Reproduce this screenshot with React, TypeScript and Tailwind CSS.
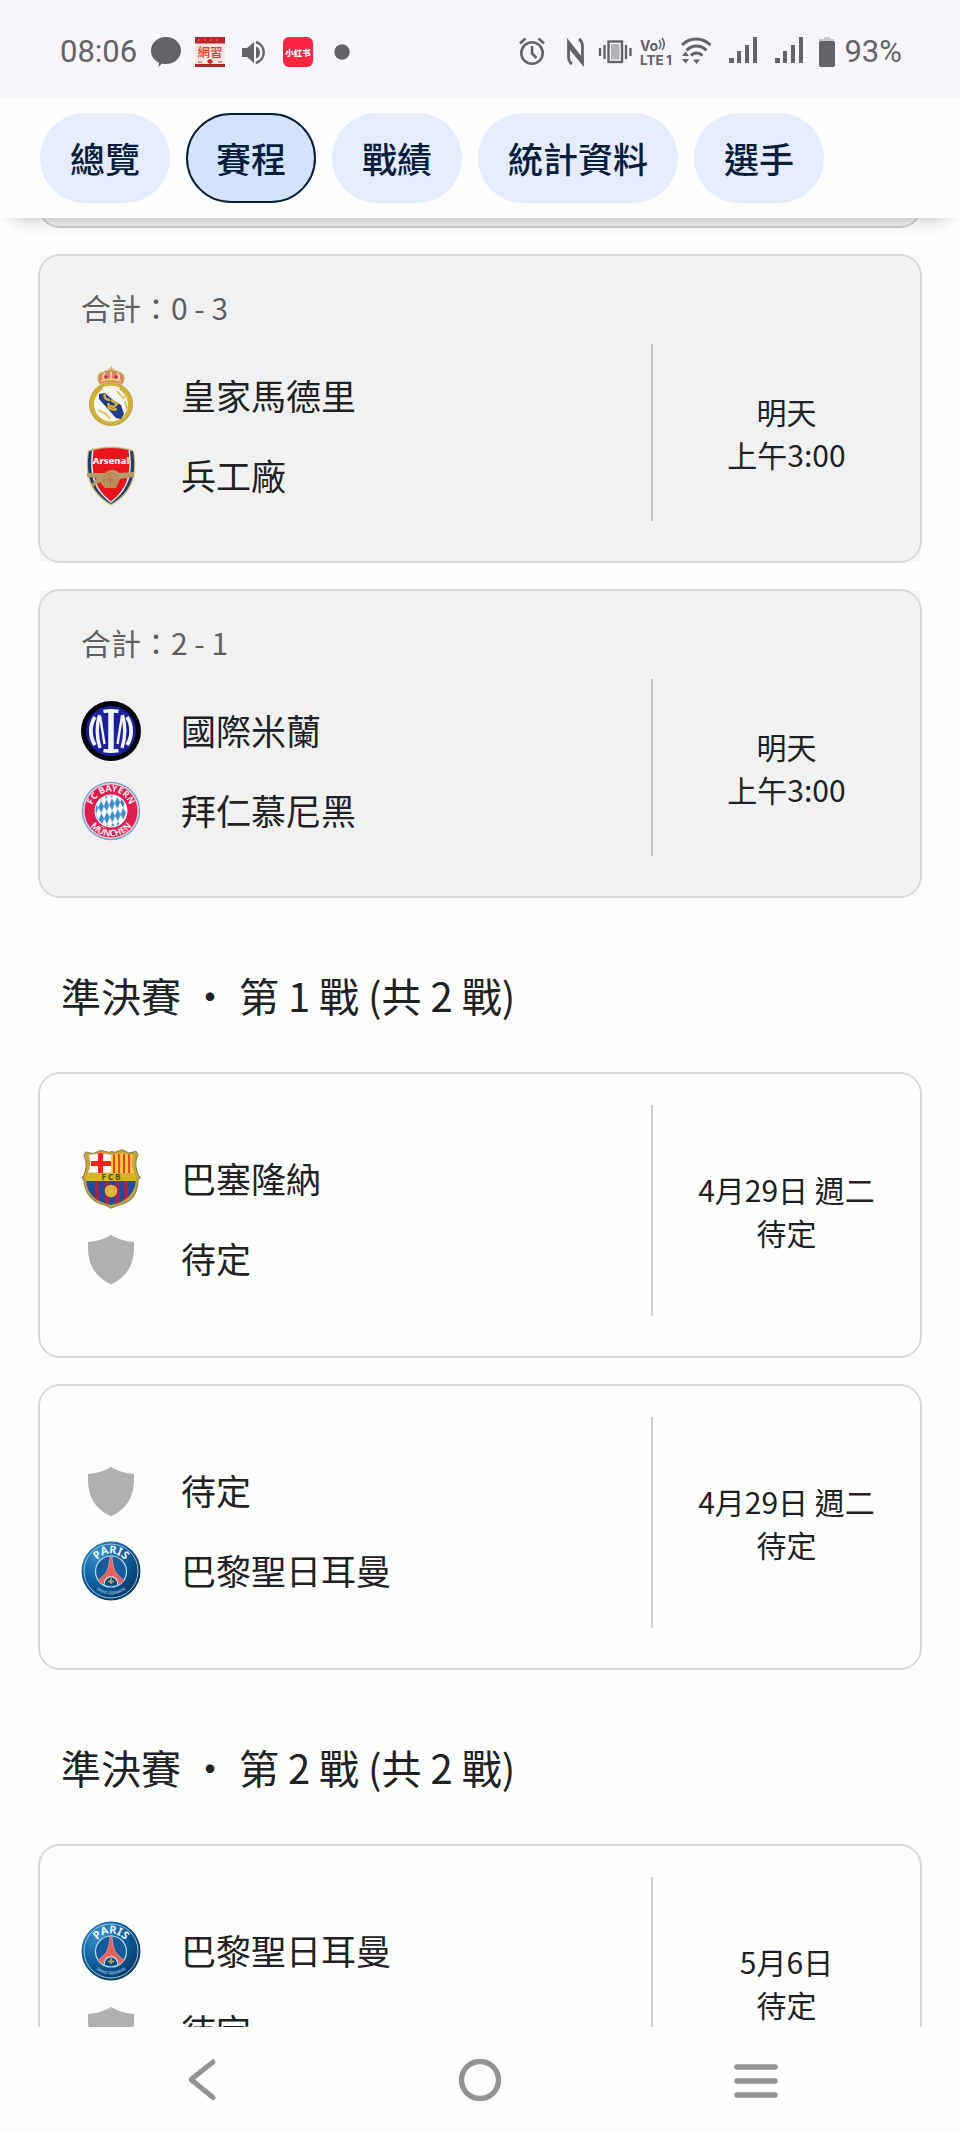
import React, { useState } from "react";

type Crest = "real" | "arsenal" | "inter" | "bayern" | "barca" | "psg" | "tbd";

interface Team {
  name: string;
  crest: Crest;
}

interface Match {
  aggregate?: string;
  teams: Team[];
  date: string;
  time: string;
}

const tbd: Team = { name: "待定", crest: "tbd" };
const barca: Team = { name: "巴塞隆納", crest: "barca" };
const psg: Team = { name: "巴黎聖日耳曼", crest: "psg" };

const quarterFinals: Match[] = [
  {
    aggregate: "合計：0 - 3",
    teams: [
      { name: "皇家馬德里", crest: "real" },
      { name: "兵工廠", crest: "arsenal" },
    ],
    date: "明天",
    time: "上午3:00",
  },
  {
    aggregate: "合計：2 - 1",
    teams: [
      { name: "國際米蘭", crest: "inter" },
      { name: "拜仁慕尼黑", crest: "bayern" },
    ],
    date: "明天",
    time: "上午3:00",
  },
];

const semiFinals = [
  {
    title: "準決賽 ・ 第 1 戰 (共 2 戰)",
    matches: [
      { teams: [barca, tbd], date: "4月29日 週二", time: "待定" },
      { teams: [tbd, psg], date: "4月29日 週二", time: "待定" },
    ],
  },
  {
    title: "準決賽 ・ 第 2 戰 (共 2 戰)",
    matches: [{ teams: [psg, tbd], date: "5月6日", time: "待定" }],
  },
];

const tabs = ["總覽", "賽程", "戰績", "統計資料", "選手"];

function RealCrest() {
  return (
    <svg viewBox="0 0 60 60" className="size-[60px]" aria-hidden="true">
      <circle cx="30" cy="38" r="21.5" fill="#d2b13a" />
      <circle cx="30" cy="38" r="21.5" fill="none" stroke="#b3942c" strokeWidth="0.8" />
      <circle cx="30" cy="38.5" r="17" fill="#f7f6f2" />
      <path d="M18 28l6-1 8 7 8 5 3 9-3 5-5-1-8-9-9-10z" fill="#1f3c88" />
      <path d="M24 28c-2 4 2 6 5 6M28 37c-2 5 2 8 8 6M30 34l6 4-3 3-4-1" fill="none" stroke="#d2b13a" strokeWidth="2.4" />
      <path d="M17 44l8 4 4 5M36 25l6 7 3-2M44 35l2 8" fill="none" stroke="#dcc15c" strokeWidth="1.8" />
      <ellipse cx="30" cy="22.5" rx="9" ry="2.8" fill="#f4f1e6" />
      <path d="M19 18c-4-6-2-11 4-12 2-2 4-2 7-2s5 0 7 2c6 1 8 6 4 12-7-2-15-2-22 0z" fill="#d9846a" stroke="#d9b65a" strokeWidth="1.2" />
      <path d="M20 15c6-2 14-2 20 0" fill="none" stroke="#e8cf7a" strokeWidth="1.6" />
      <path d="M30 0v7M27 3h6" stroke="#cfa94a" strokeWidth="1.2" />
      <path d="M24 7c-3 3-3 5-1 7M36 7c3 3 3 5 1 7M30 6v7" fill="none" stroke="#f0dca0" strokeWidth="1.6" />
      <circle cx="25" cy="11" r="1.4" fill="#b5262a" />
      <circle cx="35" cy="11" r="1.4" fill="#b5262a" />
    </svg>
  );
}

function ArsenalCrest() {
  return (
    <svg viewBox="0 0 60 60" className="size-[60px]" aria-hidden="true">
      <path d="M7 4.500C20-.5 40-.5 53 4.500c3 20 2 41-23 55C5 45.500 4 24.500 7 4.500z" fill="#c9b57c" />
      <path d="M8 5.500C21 .7 39 .7 52 5.500c3 19 1 39-22 52.500C7 44.500 5 24.500 8 5.500z" fill="#253c6b" />
      <path d="M11 4.500C23 1 37 1 49 4.500c2 19 2 37-19 52.500C9 41.500 9 23.500 11 4.500z" fill="#eef0f5" />
      <path d="M12.500 4.300C24 1.300 36 1.300 47.500 4.300c2 19 2 36-17.500 51.200C10.500 40.300 10.500 23.300 12.500 4.300z" fill="#e8161b" />
      <text x="30" y="18" textAnchor="middle" fontFamily="Noto Sans" fontWeight="800" fontSize="9.500" fill="#ffffff">
        Arsenal
      </text>
      <path d="M6 27h18c4-4 11-4 14 0l15-1v5l-14 2-4 9H24l-5-6-7 5-1-3 5-6-10-1z" fill="#b09a68" />
      <circle cx="29.500" cy="34" r="7" fill="#b09a68" stroke="#c9803f" strokeWidth="1.400" />
      <path d="M29.500 28v12M23.500 34h12M25.500 30l8 8M33.500 30l-8 8" stroke="#c96a45" strokeWidth="1" />
    </svg>
  );
}

function InterCrest() {
  return (
    <svg viewBox="0 0 60 60" className="size-[60px]" aria-hidden="true">
      <circle cx="30" cy="30" r="30" fill="#02020a" />
      <circle cx="30" cy="30" r="25" fill="#1a1f9c" />
      <g fill="none" stroke="#f3f4fb">
        <path d="M30 10v40" strokeWidth="5.500" />
        <path d="M22.500 10.500q7.500-1.500 15 0M22.500 49.500q7.500 1.500 15 0" strokeWidth="3.600" />
        <path d="M14 16C8.500 24 8.500 36 14 44" strokeWidth="3.800" />
        <path d="M46 16C51.500 24 51.500 36 46 44" strokeWidth="3.800" />
        <path d="M18.500 14c-3 10-3 22 .5 33" strokeWidth="3.400" />
        <path d="M41.500 14c3 10 3 22-.5 33" strokeWidth="3.400" />
        <path d="M19 15l4.500 28M41 15l-4.500 28" strokeWidth="2.400" />
      </g>
    </svg>
  );
}

function BayernCrest() {
  return (
    <svg viewBox="0 0 60 60" className="size-[60px]" aria-hidden="true">
      <defs>
        <clipPath id="bayern-core">
          <circle cx="30" cy="30" r="15.500" />
        </clipPath>
        <pattern id="bayern-lozenge" width="5.600" height="12" patternUnits="userSpaceOnUse" patternTransform="rotate(-14) skewX(-12)">
          <rect width="5.600" height="12" fill="#fff" />
          <path d="M2.800 0l2.800 6-2.800 6L0 6z" fill="#3d8cc8" />
        </pattern>
        <path id="bayern-top" d="M10.500 30a19.500 19.500 0 0 1 39 0" />
        <path id="bayern-bottom" d="M4.500 30a25.500 25.500 0 0 0 51 0" />
      </defs>
      <circle cx="30" cy="30" r="29.200" fill="#6f9fcf" />
      <circle cx="30" cy="30" r="28" fill="#f0cdda" />
      <circle cx="30" cy="30" r="26.500" fill="#dc1f50" />
      <circle cx="30" cy="30" r="16.500" fill="#fff" />
      <rect x="12" y="12" width="36" height="36" fill="url(#bayern-lozenge)" clipPath="url(#bayern-core)" />
      <g fontFamily="Noto Sans" fontWeight="700" fontSize="9" fill="#fbe9ee">
        <text textAnchor="middle">
          <textPath href="#bayern-top" startOffset="50%">FC BAYERN</textPath>
        </text>
        <text textAnchor="middle">
          <textPath href="#bayern-bottom" startOffset="50%">MÜNCHEN</textPath>
        </text>
      </g>
    </svg>
  );
}

function BarcaCrest() {
  const outline = "M5 3l7 1.500 8-3 8 2 3-1 2 1 8-2.500 7 3 7-1.500 2 3c-4 8-2 14 0 20l2 3-2 2c0 16-8 23-19 25.500L30 59l-6-3C13 54 4 46 3 31.500l-2-3 2-2c2-6 4-12 0-20z";
  return (
    <svg viewBox="0 0 60 60" className="size-[60px]" aria-hidden="true">
      <defs>
        <clipPath id="barca-shield">
          <path d="M8 6l12-2 10 2 10-2 12 2c-2 8-1 15 3 22 0 15-7 24-25 28C12 52 5 43 5 28 9 21 10 14 8 6z" />
        </clipPath>
      </defs>
      <path d={outline} fill="#c9a437" stroke="#8d8455" strokeWidth="1.200" />
      <g clipPath="url(#barca-shield)">
        <rect width="60" height="60" fill="#e5b92f" />
        <rect width="30" height="18.500" y="5" fill="#fdf6f2" />
        <path d="M19.500 4v20M10 14.500h20" stroke="#f0221c" strokeWidth="5" />
        <rect x="30" y="5" width="24" height="19" fill="#f8cf3a" />
        <path d="M33 5v19M38 5v19M43 5v19M48 5v19" stroke="#e4462a" strokeWidth="2.200" />
        <rect y="24" width="60" height="8" fill="#d6b133" />
        <rect y="32" width="60" height="28" fill="#1c4f9c" />
        <path d="M16 32v24M26 32v24M36 32v24M45 32v24" stroke="#a5234f" strokeWidth="4.600" />
      </g>
      <text x="30" y="31" textAnchor="middle" fontFamily="Noto Sans" fontWeight="700" fontSize="8" fill="#45522c">
        F C B
      </text>
      <circle cx="30" cy="42" r="6.200" fill="#e6bd39" />
      <circle cx="30" cy="42" r="4" fill="none" stroke="#c99c28" strokeWidth="0.800" />
    </svg>
  );
}

function PsgCrest() {
  return (
    <svg viewBox="0 0 60 60" className="size-[60px]" aria-hidden="true">
      <defs>
        <radialGradient id="psg-blue" cx="30%" cy="25%" r="85%">
          <stop offset="0" stopColor="#3a93cb" />
          <stop offset="0.500" stopColor="#10609f" />
          <stop offset="1" stopColor="#08345f" />
        </radialGradient>
        <path id="psg-top" d="M12.500 30a17.500 17.500 0 0 1 35 0" />
        <path id="psg-bottom" d="M6.500 30a23.500 23.500 0 0 0 47 0" />
      </defs>
      <circle cx="30" cy="30" r="29.500" fill="url(#psg-blue)" />
      <circle cx="30" cy="30" r="27" fill="none" stroke="#a7cfe8" strokeWidth="0.900" />
      <circle cx="30" cy="30.500" r="15.500" fill="#155c9c" stroke="#b9d9ee" strokeWidth="1.200" />
      <text textAnchor="middle" fontFamily="Noto Sans" fontWeight="700" fontSize="11" fill="#e8f3fa">
        <textPath href="#psg-top" startOffset="50%">PARIS</textPath>
      </text>
      <text textAnchor="middle" fontFamily="Noto Sans" fontWeight="600" fontSize="4" fill="#8fc0e2">
        <textPath href="#psg-bottom" startOffset="50%">SAINT-GERMAIN</textPath>
      </text>
      <path d="M29 15h2c.5 9 2.500 15 5 18l7 6.500-4.500 4.500c-1-6-4-8-8.500-8s-7.500 2-8.500 8L17 39.500l7-6.500c2.500-3 4.500-9 5-18z" fill="#e8605a" stroke="#e9b7b8" strokeWidth="0.600" />
      <path d="M23 44c0-11 14-11 14 0" fill="#0f4a80" stroke="#dcebf5" strokeWidth="1.200" />
      <path d="M30 37v6M27 40.500h6" stroke="#b9b04a" strokeWidth="1.600" />
    </svg>
  );
}

function TbdCrest() {
  return (
    <svg viewBox="0 0 60 60" className="size-[60px]" aria-hidden="true">
      <path d="M30 6q10 6 23 7c1 22-6 34-23 42.500C13 47 6 35 7 13q13-1 23-7z" fill="#b0b0b0" />
    </svg>
  );
}

const crests: Record<Crest, () => React.ReactElement> = {
  real: RealCrest,
  arsenal: ArsenalCrest,
  inter: InterCrest,
  bayern: BayernCrest,
  barca: BarcaCrest,
  psg: PsgCrest,
  tbd: TbdCrest,
};

function SignalIcon() {
  return (
    <svg viewBox="0 0 38 30" className="h-[30px] w-[38px]" fill="currentColor" aria-hidden="true">
      <rect x="9" y="21" width="5" height="5" />
      <rect x="17" y="14" width="4" height="12" />
      <rect x="25" y="8" width="4" height="18" />
      <rect x="33" y="0" width="4" height="26" />
    </svg>
  );
}

function StatusBar() {
  return (
    <header className="flex h-[98px] shrink-0 items-center justify-between bg-[#f7f6fb] pt-[6px] pr-[58px] pl-[60px] font-['Roboto',sans-serif] text-[31px] leading-9 text-[#646368]">
      <div className="flex items-center gap-[14px]">
        <span>08:06</span>
        <svg viewBox="0 0 30 30" className="size-[30px]" fill="currentColor" aria-hidden="true">
          <path d="M15 0c8.500 0 15 6 15 13.500S23.500 27 15 27c-1.500 0-3 0-4-.500L7.500 30l.5-4.500C3 23.500 0 19 0 13.500 0 6 6.500 0 15 0z" />
        </svg>
        <svg viewBox="0 0 30 30" className="size-[30px]" aria-hidden="true">
          <rect width="30" height="30" fill="#f6e6df" />
          <rect width="30" height="6.500" fill="#b9252d" />
          <path d="M3 3h24" stroke="#d9604c" strokeWidth="1.500" strokeDasharray="2 4" />
          <text x="15" y="20" textAnchor="middle" fontFamily="Noto Sans CJK TC" fontWeight="500" fontSize="12.500" fill="#cf3a38">
            網習
          </text>
          <path d="M3 25h4M23 25h4" stroke="#c97a6c" strokeWidth="1.500" />
          <path d="M12 25q3-6 6 0l-3 2z" fill="#c4242c" />
          <rect y="27" width="30" height="3" fill="#b9252d" />
        </svg>
        <svg viewBox="0 0 30 30" className="size-[30px]" aria-hidden="true">
          <path d="M3 11h5l7-6v21l-7-6H3z" fill="currentColor" />
          <path d="M17 9.500a6.500 6.500 0 0 1 0 12" fill="currentColor" />
          <path d="M17 5a11 11 0 0 1 0 21" fill="none" stroke="currentColor" strokeWidth="2.400" />
        </svg>
        <svg viewBox="0 0 30 30" className="size-[30px]" aria-hidden="true">
          <rect width="30" height="30" rx="6" fill="#fb2542" />
          <text x="15" y="18.500" textAnchor="middle" fontFamily="Noto Sans CJK SC" fontWeight="900" fontSize="8.500" fill="#fff">
            小红书
          </text>
        </svg>
        <svg viewBox="0 0 30 30" className="size-[30px]" fill="currentColor" aria-hidden="true">
          <circle cx="15" cy="15" r="7.700" />
        </svg>
      </div>

      <div className="flex items-center gap-2">
        <svg viewBox="0 0 36 30" className="h-[30px] w-9" fill="none" stroke="currentColor" strokeWidth="2.600" aria-hidden="true">
          <circle cx="22" cy="16" r="10.700" />
          <path d="M22 9v7.500l4.500 4.500M10 6.500l5.500-5M34 6.500l-5.500-5" />
        </svg>
        <svg viewBox="0 0 36 30" className="h-[30px] w-9" fill="none" stroke="currentColor" strokeWidth="2.800" aria-hidden="true">
          <path d="M18 27c-3-2-3.500-5-3.500-8V5l13 16.500M25 2c3 2 3.500 5 3.500 8v16L15 9.500" />
        </svg>
        <svg viewBox="0 0 34 30" className="h-[30px] w-[34px]" fill="none" stroke="currentColor" strokeWidth="2.400" aria-hidden="true">
          <rect x="10.500" y="4.500" width="13.500" height="20.500" />
          <rect x="13" y="7" width="8.500" height="15.500" fill="#b4b3b8" stroke="none" />
          <path d="M6.500 8v14M28 8v14M2 11v8M32.500 11v8" />
        </svg>
        <svg viewBox="0 0 32 30" className="h-[30px] w-8" fill="currentColor" aria-hidden="true">
          <text x="0" y="14" fontFamily="Inter" fontWeight="700" fontSize="14">
            Vo
          </text>
          <text x="0" y="28" fontFamily="Inter" fontWeight="700" fontSize="13.500">
            LTE
          </text>
          <text x="26" y="28" fontFamily="Inter" fontWeight="700" fontSize="13.500">
            1
          </text>
          <path d="M19 3q3.500 4.500 0 9M22 1q4.500 6.500 0 12" fill="none" stroke="currentColor" strokeWidth="1.600" />
        </svg>
        <svg viewBox="0 0 32 30" className="h-[30px] w-8" fill="none" stroke="currentColor" strokeWidth="3" aria-hidden="true">
          <path d="M2 8C10 0 22 0 30.500 8M6.500 13.500c5.500-6 14.500-6 20 0M11 18.500c3-3.500 8-3.500 11.500 0" />
          <path d="M13 22.500h7L16.500 27zM2 19h7L5.500 14.500zM2 22h7L5.500 26.500z" fill="currentColor" stroke="none" />
        </svg>
        <SignalIcon />
        <SignalIcon />
        <svg viewBox="0 0 24 30" className="h-[30px] w-6" aria-hidden="true">
          <path d="M12 0h6v2h4v3H7V2h5z" fill="#c9c8cd" />
          <rect x="7" y="4" width="16" height="26" rx="2" fill="currentColor" />
        </svg>
        <span>93%</span>
      </div>
    </header>
  );
}

function MatchCard({ match }: { match: Match }) {
  const live = Boolean(match.aggregate);

  return (
    <article className={`mx-[38px] border-2 border-transparent bg-clip-padding ${live ? "bg-[#f6f6f6]" : "bg-[#fefefe]"}`}>
      <div
        className={`-m-[2px] rounded-[22px] border-2 border-[#d9d9d9] pb-10 pl-[41px] ${
          live ? "bg-[#f1f1f1] pt-7" : "pt-[31px]"
        }`}
      >
        {live && <p className="mb-[14px] text-[30px] leading-[46px] text-[#5f5f5f]">{match.aggregate}</p>}
        <div className="flex">
          <ul className={`grow ${live ? "pt-3 pb-[5px]" : "pt-[34px] pb-[17px]"}`}>
            {match.teams.map((team) => {
              const Logo = crests[team.crest];
              return (
                <li key={team.name} className="flex h-20 items-center gap-10 text-[35px] leading-[50px]">
                  <Logo />
                  <span className="pb-[2px]">{team.name}</span>
                </li>
              );
            })}
          </ul>
          <div
            className={`flex w-[269px] flex-col justify-center border-l-2 text-center text-[30px] leading-[43px] ${
              live ? "border-[#c3c3c3]" : "border-[#cecece]"
            }`}
          >
            <p>{match.date}</p>
            <p>{match.time}</p>
          </div>
        </div>
      </div>
    </article>
  );
}

export default function App() {
  const [active, setActive] = useState("賽程");

  return (
    <div
      lang="zh-Hant"
      className="flex h-screen flex-col overflow-hidden bg-[#fefefe] font-['Noto_Sans_CJK_TC',sans-serif] text-[#202124]"
    >
      <StatusBar />

      <nav className="relative z-10 flex shrink-0 gap-4 bg-[#fefefe] px-10 py-[15px] shadow-[0_14px_16px_-12px_rgba(0,0,0,0.22)]">
        {tabs.map((tab) => (
          <button
            key={tab}
            type="button"
            onClick={() => setActive(tab)}
            className={`h-[90px] rounded-full border-2 px-7 text-[35px] leading-[50px] font-medium text-[#041e3c] ${
              tab === active ? "border-[#041e3c] bg-[#d3e3fd]" : "border-transparent bg-[#e6ebfe]"
            }`}
          >
            {tab}
          </button>
        ))}
      </nav>

      <main className="min-h-0 grow overflow-hidden">
        {/* tail of the previous match, scrolled under the tabs */}
        <div className="mx-[38px] -mt-[50px] h-[60px] rounded-[22px] border-2 border-[#d0d0d0] bg-[#f1f1f1]" />
        <div className="flex flex-col gap-[26px] pt-[26px]">
          {quarterFinals.map((match, i) => (
            <MatchCard key={i} match={match} />
          ))}
        </div>

        {semiFinals.map((leg) => (
          <section key={leg.title}>
            <h2 className="px-[61px] pt-[67px] pb-[47px] text-[40px] leading-[60px]">{leg.title}</h2>
            <div className="flex flex-col gap-[26px]">
              {leg.matches.map((match, i) => (
                <MatchCard key={i} match={match} />
              ))}
            </div>
          </section>
        ))}
      </main>

      <footer className="grid h-[106px] shrink-0 grid-cols-3 place-items-center bg-[#fefefe] px-16 text-[#939393]">
        <button type="button" aria-label="返回">
          <svg viewBox="0 0 48 48" className="size-12" fill="none" stroke="currentColor" strokeWidth="5" strokeLinecap="round" strokeLinejoin="round">
            <path d="M34 6L12 23.500l22 18" />
          </svg>
        </button>
        <button type="button" aria-label="主畫面">
          <svg viewBox="0 0 48 48" className="size-12" fill="none" stroke="currentColor" strokeWidth="5.500">
            <circle cx="24" cy="24" r="18.500" />
          </svg>
        </button>
        <button type="button" aria-label="最近使用">
          <svg viewBox="0 0 48 48" className="size-12" fill="none" stroke="currentColor" strokeWidth="5.500" strokeLinecap="round">
            <path d="M4 11h38M4 25h38M4 39h38" />
          </svg>
        </button>
      </footer>
    </div>
  );
}
